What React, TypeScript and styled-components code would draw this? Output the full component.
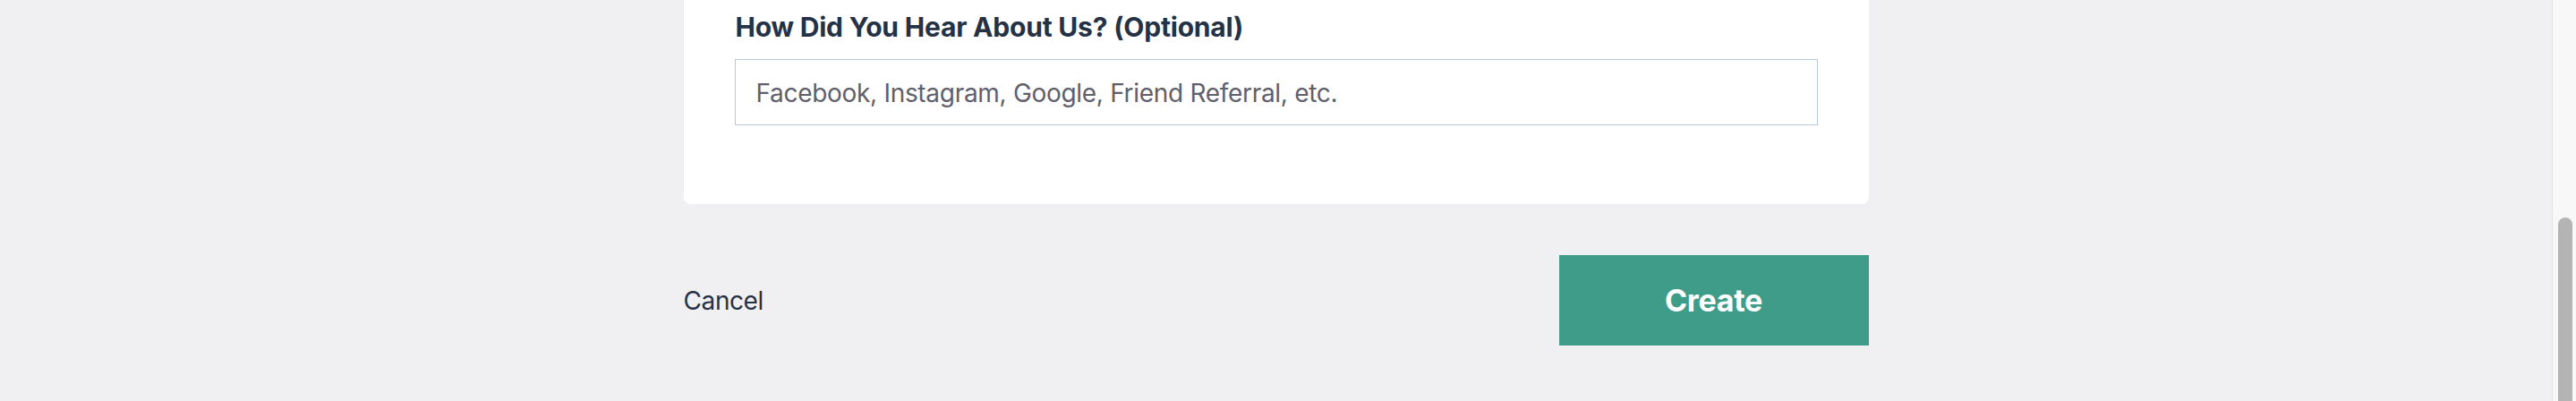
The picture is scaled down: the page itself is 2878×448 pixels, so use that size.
import React from "react";
import styled, { createGlobalStyle } from "styled-components";

const GlobalStyle = createGlobalStyle`
  html, body {
    margin: 0;
    padding: 0;
    height: 448px;
    overflow: hidden;
    background: #f0f0f2;
    font-family: Inter, "Liberation Sans", sans-serif;
  }
  * { box-sizing: border-box; }
`;

const Shell = styled.div`
  display: flex;
  height: 448px;
  width: 100%;
`;

const Main = styled.main`
  flex: 1;
  display: flex;
  justify-content: center;
`;

const Column = styled.div`
  width: 1324px;
  display: flex;
  flex-direction: column;
`;

const Card = styled.section`
  background: #ffffff;
  border-radius: 0 0 8px 8px;
  padding: 11px 57px 88px 57px;
  display: flex;
  flex-direction: column;
`;

const Label = styled.label`
  font-size: 30px;
  font-weight: 700;
  letter-spacing: -0.2px;
  color: #253246;
  line-height: 38px;
  margin-bottom: 17px;
  padding-left: 1px;
`;

const Input = styled.input`
  height: 74px;
  width: 100%;
  border: 1.5px solid #b8c9d9;
  border-radius: 0;
  padding: 2px 23px 0;
  font-family: Inter, "Liberation Sans", sans-serif;
  font-size: 28px;
  letter-spacing: -0.3px;
  color: #253246;
  background: #fff;
  outline: none;
  &::placeholder {
    color: #5f606b;
  }
`;

const Footer = styled.div`
  display: flex;
  align-items: center;
  justify-content: space-between;
  margin-top: 57px;
`;

const CancelButton = styled.button`
  background: none;
  border: none;
  padding: 0;
  font-family: Inter, "Liberation Sans", sans-serif;
  font-size: 28px;
  letter-spacing: -0.4px;
  color: #253246;
  cursor: pointer;
`;

const CreateButton = styled.button`
  width: 346px;
  height: 101px;
  background: #3e9c88;
  border: none;
  color: #ffffff;
  font-family: Inter, "Liberation Sans", sans-serif;
  font-size: 34px;
  font-weight: 700;
  letter-spacing: -0.3px;
  cursor: pointer;
`;

const ScrollTrack = styled.div`
  width: 27px;
  background: #f8f8f8;
  border-left: 1px solid #e2e2e2;
  display: flex;
  flex-direction: column;
  padding: 243px 4px 0 6px;
`;

const ScrollThumb = styled.div`
  flex: 1;
  background: #b4b4b4;
  border-radius: 8px 8px 0 0;
`;

export default function App() {
  return (
    <>
      <GlobalStyle />
      <Shell>
        <Main>
          <Column>
            <Card>
              <Label htmlFor="source">How Did You Hear About Us? (Optional)</Label>
              <Input
                id="source"
                placeholder="Facebook, Instagram, Google, Friend Referral, etc."
              />
            </Card>
            <Footer>
              <CancelButton>Cancel</CancelButton>
              <CreateButton>Create</CreateButton>
            </Footer>
          </Column>
        </Main>
        <ScrollTrack>
          <ScrollThumb />
        </ScrollTrack>
      </Shell>
    </>
  );
}
